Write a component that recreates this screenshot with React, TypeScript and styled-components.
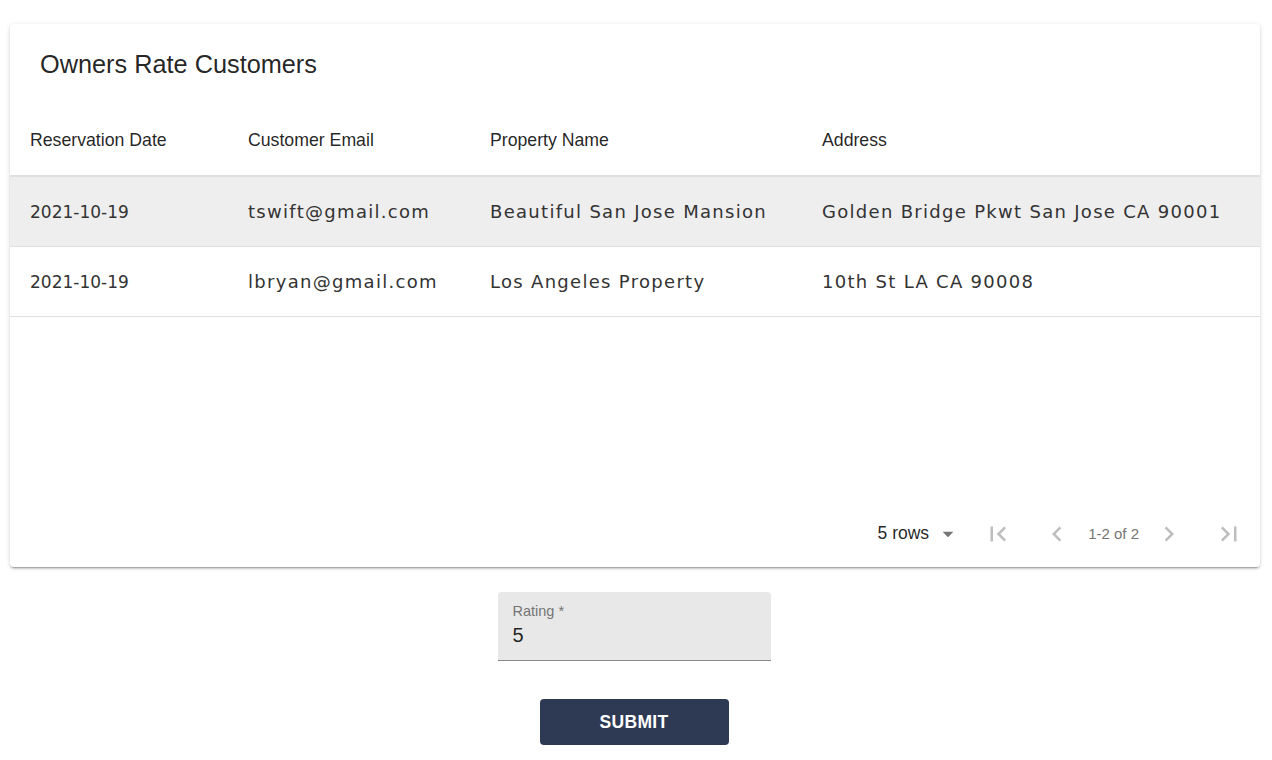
import React from "react";
import styled, { createGlobalStyle } from "styled-components";
import { MdFirstPage, MdLastPage, MdChevronLeft, MdChevronRight, MdArrowDropDown } from "react-icons/md";

const Global = createGlobalStyle`
  html, body { margin: 0; padding: 0; background: #fff; }
  body { font-family: "Liberation Sans", Arial, sans-serif; }
`;

const Page = styled.div`
  padding: 24px 12px 0 10px;
  display: flex;
  flex-direction: column;
  align-items: center;
`;

const Card = styled.div`
  width: 1250px;
  background: #fff;
  border-radius: 4px;
  box-shadow: 0px 3px 1px -2px rgba(0,0,0,0.2), 0px 2px 2px 0px rgba(0,0,0,0.14), 0px 1px 5px 0px rgba(0,0,0,0.12);
  display: flex;
  flex-direction: column;
`;

const TitleBar = styled.div`
  height: 81px;
  display: flex;
  align-items: center;
  padding-left: 30px;
  font-size: 25.3px;
  color: rgba(0,0,0,0.87);
`;

const Table = styled.div`
  display: flex;
  flex-direction: column;
`;

const cols = "218px 242px 332px 1fr";

const HeadRow = styled.div`
  display: grid;
  grid-template-columns: ${cols};
  height: 70px;
  align-items: center;
  padding-left: 20px;
  border-bottom: 2px solid #e0e0e0;
  font-size: 17.7px;
  color: rgba(0,0,0,0.87);
`;

const Row = styled.div<{ $shaded?: boolean }>`
  display: grid;
  grid-template-columns: ${cols};
  height: 69px;
  align-items: center;
  padding-left: 20px;
  border-bottom: 1px solid #e0e0e0;
  background: ${(p) => (p.$shaded ? "#eeeeee" : "#fff")};
  font-family: "DejaVu Sans", sans-serif;
  font-weight: 400;
  color: #333;
`;

const Cell = styled.div`
  white-space: nowrap;
`;

const DataCell = styled.div<{ $numeric?: boolean }>`
  white-space: nowrap;
  font-size: ${(p) => (p.$numeric ? "17px" : "18px")};
  letter-spacing: ${(p) => (p.$numeric ? "0" : "1.3px")};
`;

const Filler = styled.div`
  height: 183px;
`;

const Pager = styled.div`
  height: 67px;
  display: flex;
  align-items: center;
  justify-content: flex-end;
  padding-right: 16px;
`;

const RowsSelect = styled.div`
  display: flex;
  align-items: center;
  font-size: 17.5px;
  color: rgba(0,0,0,0.87);
  margin-right: 22px;
  svg { margin-left: 6px; color: #757575; }
`;

const IconBtn = styled.span<{ $ml?: number }>`
  display: inline-flex;
  align-items: center;
  justify-content: center;
  width: 30px;
  height: 30px;
  color: #bdbdbd;
  margin-left: ${(p) => p.$ml ?? 0}px;
`;

const PageInfo = styled.span`
  font-size: 15px;
  color: #757575;
  margin: 0 15px 0 16px;
`;

const Field = styled.div`
  margin-top: 25px;
  margin-right: 2px;
  width: 273px;
  height: 69px;
  background: #e8e8e8;
  border-radius: 4px 4px 0 0;
  border-bottom: 1px solid #8a8a8a;
  padding: 11px 15px 0;
  box-sizing: border-box;
  display: flex;
  flex-direction: column;
`;

const FieldLabel = styled.span`
  font-size: 14.5px;
  color: #757575;
`;

const FieldValue = styled.span`
  font-size: 20px;
  color: rgba(0,0,0,0.87);
  margin-top: 5px;
`;

const Submit = styled.button`
  margin-top: 38px;
  margin-right: 2px;
  width: 189px;
  height: 46px;
  border: none;
  border-radius: 4px;
  background: #2e3a53;
  color: #fff;
  font-family: "Liberation Sans", Arial, sans-serif;
  font-size: 17.5px;
  font-weight: 700;
  letter-spacing: 0.3px;
`;

const data = [
  { date: "2021-10-19", email: "tswift@gmail.com", name: "Beautiful San Jose Mansion", address: "Golden Bridge Pkwt San Jose CA 90001" },
  { date: "2021-10-19", email: "lbryan@gmail.com", name: "Los Angeles Property", address: "10th St LA CA 90008" },
];

export default function App() {
  return (
    <>
      <Global />
      <Page>
        <Card>
          <TitleBar>Owners Rate Customers</TitleBar>
          <Table>
            <HeadRow>
              <Cell>Reservation Date</Cell>
              <Cell>Customer Email</Cell>
              <Cell>Property Name</Cell>
              <Cell>Address</Cell>
            </HeadRow>
            {data.map((d, i) => (
              <Row key={i} $shaded={i === 0}>
                <DataCell $numeric>{d.date}</DataCell>
                <DataCell>{d.email}</DataCell>
                <DataCell>{d.name}</DataCell>
                <DataCell>{d.address}</DataCell>
              </Row>
            ))}
            <Filler />
          </Table>
          <Pager>
            <RowsSelect>
              5 rows
              <MdArrowDropDown size={26} />
            </RowsSelect>
            <IconBtn><MdFirstPage size={30} /></IconBtn>
            <IconBtn $ml={29}><MdChevronLeft size={30} /></IconBtn>
            <PageInfo>1-2 of 2</PageInfo>
            <IconBtn><MdChevronRight size={30} /></IconBtn>
            <IconBtn $ml={30}><MdLastPage size={30} /></IconBtn>
          </Pager>
        </Card>
        <Field>
          <FieldLabel>Rating *</FieldLabel>
          <FieldValue>5</FieldValue>
        </Field>
        <Submit>SUBMIT</Submit>
      </Page>
    </>
  );
}
